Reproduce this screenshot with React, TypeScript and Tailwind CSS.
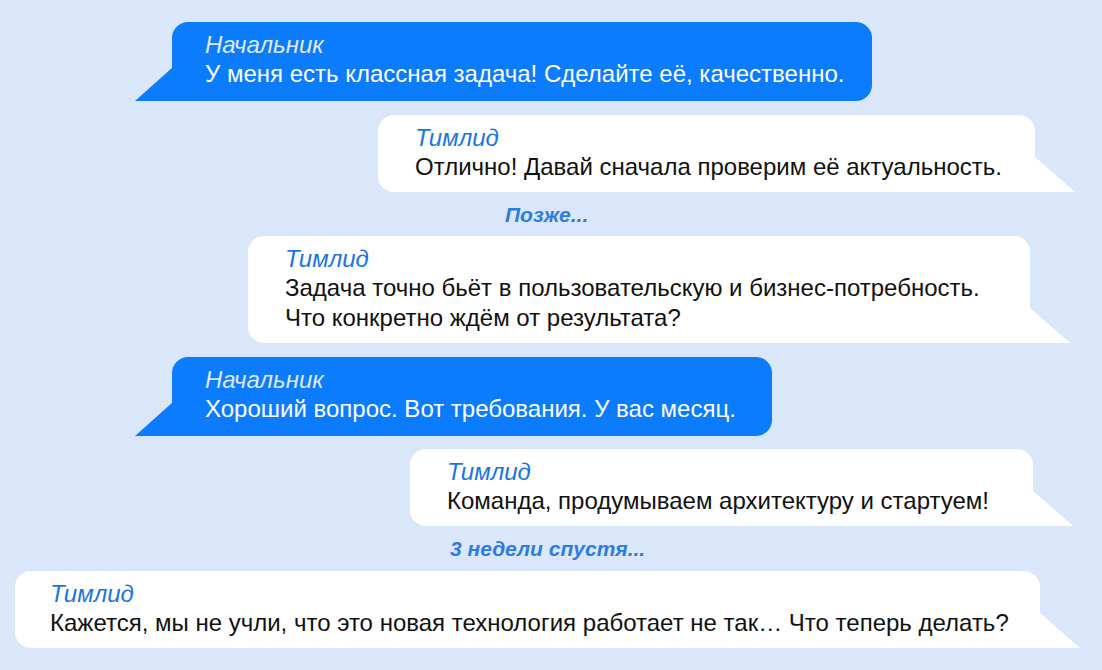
import React from "react";

type Msg = {
  kind: "boss" | "lead";
  name: string;
  lines: string[];
  box: string;
};

type Item = Msg | { kind: "note"; text: string; box: string };

// box: left offset, width, top gap and left padding of each row
const items: Item[] = [
  {
    kind: "boss",
    name: "Начальник",
    lines: ["У меня есть классная задача! Сделайте её, качественно."],
    box: "ml-[172px] w-[700px] mt-[22px] pl-[33px]",
  },
  {
    kind: "lead",
    name: "Тимлид",
    lines: ["Отлично! Давай сначала проверим её актуальность."],
    box: "ml-[378px] w-[657px] mt-[14px] pl-[37px]",
  },
  { kind: "note", text: "Позже...", box: "pl-[505px] h-[44px]" },
  {
    kind: "lead",
    name: "Тимлид",
    lines: [
      "Задача точно бьёт в пользовательскую и бизнес-потребность.",
      "Что конкретно ждём от результата?",
    ],
    box: "ml-[248px] w-[782px] pl-[37px]",
  },
  {
    kind: "boss",
    name: "Начальник",
    lines: ["Хороший вопрос. Вот требования. У вас месяц."],
    box: "ml-[172px] w-[600px] mt-[14px] pl-[33px]",
  },
  {
    kind: "lead",
    name: "Тимлид",
    lines: ["Команда, продумываем архитектуру и стартуем!"],
    box: "ml-[410px] w-[623px] mt-[13px] pl-[37px]",
  },
  { kind: "note", text: "3 недели спустя...", box: "pl-[450px] h-[45px]" },
  {
    kind: "lead",
    name: "Тимлид",
    lines: [
      "Кажется, мы не учли, что это новая технология работает не так… Что теперь делать?",
    ],
    box: "ml-[15px] w-[1025px] pl-[35px]",
  },
];

function Bubble({ msg }: { msg: Msg }) {
  const boss = msg.kind === "boss";
  return (
    <div
      className={`relative shrink-0 ${msg.box} pt-[9px] ${
        boss
          ? "bg-[#0b7cfd] text-white rounded-[16px] rounded-bl-none pb-[12px]"
          : "bg-white text-[#111111] rounded-[16px] rounded-br-none pb-[10px]"
      }`}
    >
      <p
        className={`italic text-[24px] leading-[28px] ${
          boss ? "text-[#dfe8f6]" : "text-[#1b74e4]"
        }`}
      >
        {msg.name}
      </p>
      {msg.lines.map((line, i) => (
        <p key={i} className="text-[24px] leading-[30px] whitespace-nowrap">
          {line}
        </p>
      ))}
      {boss ? (
        <span className="absolute left-[-37px] bottom-0 w-[38px] h-[34px] bg-[#0b7cfd] [clip-path:polygon(100%_0,100%_100%,0_100%)]" />
      ) : (
        <span className="absolute right-[-40px] bottom-0 w-[41px] h-[36px] bg-white [clip-path:polygon(0_0,100%_100%,0_100%)]" />
      )}
    </div>
  );
}

export default function App() {
  return (
    <main className="w-[1102px] h-[670px] overflow-hidden bg-[#dae7fb] font-['Liberation_Sans',Arial,sans-serif]">
      <div className="flex flex-col">
        {items.map((item, index) =>
          item.kind === "note" ? (
            <div key={index} className={`flex items-center shrink-0 ${item.box}`}>
              <p className="italic font-bold text-[21px] leading-none text-[#2d7ce2]">
                {item.text}
              </p>
            </div>
          ) : (
            <Bubble key={index} msg={item} />
          )
        )}
      </div>
    </main>
  );
}
